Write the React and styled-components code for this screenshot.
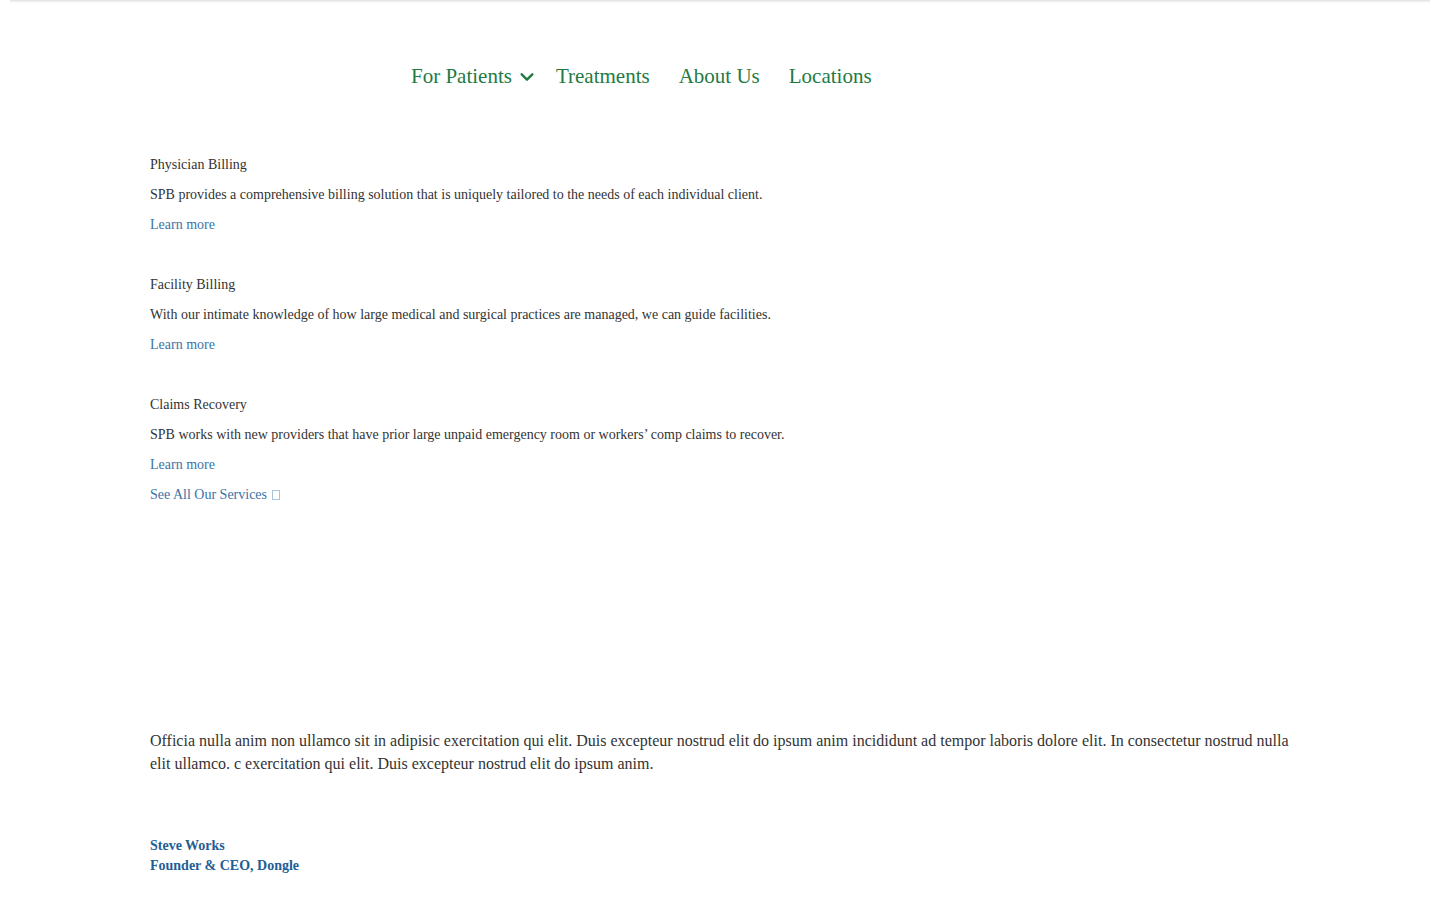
import React from 'react';
import styled, { createGlobalStyle } from 'styled-components';

const GlobalStyle = createGlobalStyle`
  html, body {
    margin: 0;
    padding: 0;
    background: #fff;
    font-family: "Liberation Serif", "Times New Roman", serif;
    color: #333;
  }
`;

const TopShadow = styled.div`
  height: 1px;
  margin: 0 10px;
  background: #e4e4e4;
  box-shadow: 0 1px 2px rgba(0, 0, 0, 0.12);
`;

const Container = styled.div`
  width: 1140px;
  margin: 0 auto;
`;

const Header = styled.header`
  display: flex;
  align-items: center;
  padding-top: 60px;
`;

const LogoSlot = styled.div`
  width: 261px;
  flex: none;
`;

const Nav = styled.nav`
  display: flex;
  align-items: center;
  gap: 29px;
`;

const NavLink = styled.a`
  display: inline-flex;
  align-items: center;
  gap: 7px;
  font-size: 21px;
  line-height: 30px;
  color: #237a43;
  text-decoration: none;
`;

const ChevronIcon = styled.svg`
  margin-right: -8px;
  margin-top: 2px;
`;

const Chevron = () => (
  <ChevronIcon width="16" height="16" viewBox="0 0 24 24" fill="none" stroke="#237a43" strokeWidth="3.6" strokeLinecap="round" strokeLinejoin="round">
    <polyline points="4 8 12 16 20 8" />
  </ChevronIcon>
);

const Services = styled.section`
  margin-top: 59px;
`;

const Service = styled.div`
  display: flex;
  flex-direction: column;
  align-items: flex-start;

  & + & {
    margin-top: 30px;
  }
`;

const Line = styled.p`
  margin: 0;
  font-size: 14px;
  line-height: 30px;
  color: #333;
`;

const TextLink = styled.a`
  display: inline-flex;
  align-items: center;
  gap: 5px;
  font-size: 14px;
  line-height: 30px;
  color: #3b73a6;
  text-decoration: none;
`;

const Tofu = styled.span`
  display: inline-block;
  width: 6px;
  height: 8px;
  border: 1px solid #a9c3dc;
`;

const Quote = styled.p`
  margin: 219px 0 0;
  font-size: 16px;
  line-height: 23px;
  color: #333;
`;

const Author = styled.div`
  margin-top: 61px;
  font-size: 14px;
  line-height: 20px;
  font-weight: bold;
  color: #1f5e95;
`;

const services = [
  {
    title: 'Physician Billing',
    text: 'SPB provides a comprehensive billing solution that is uniquely tailored to the needs of each individual client.',
  },
  {
    title: 'Facility Billing',
    text: 'With our intimate knowledge of how large medical and surgical practices are managed, we can guide facilities.',
  },
  {
    title: 'Claims Recovery',
    text: 'SPB works with new providers that have prior large unpaid emergency room or workers\u2019 comp claims to recover.',
  },
];

export default function App() {
  return (
    <>
      <GlobalStyle />
      <TopShadow />
      <Container>
        <Header>
          <LogoSlot />
          <Nav>
            <NavLink href="#">
              For Patients <Chevron />
            </NavLink>
            <NavLink href="#">Treatments</NavLink>
            <NavLink href="#">About Us</NavLink>
            <NavLink href="#">Locations</NavLink>
          </Nav>
        </Header>

        <Services>
          {services.map(s => (
            <Service key={s.title}>
              <Line>{s.title}</Line>
              <Line>{s.text}</Line>
              <TextLink href="#">Learn more</TextLink>
            </Service>
          ))}
          <TextLink href="#">
            See All Our Services <Tofu />
          </TextLink>
        </Services>

        <Quote>
          Officia nulla anim non ullamco sit in adipisic exercitation qui elit. Duis excepteur nostrud elit do ipsum anim incididunt ad tempor laboris dolore elit. In consectetur nostrud nulla elit ullamco. c exercitation qui elit. Duis excepteur nostrud elit do ipsum anim.
        </Quote>

        <Author>
          Steve Works
          <br />
          Founder &amp; CEO, Dongle
        </Author>
      </Container>
    </>
  );
}
